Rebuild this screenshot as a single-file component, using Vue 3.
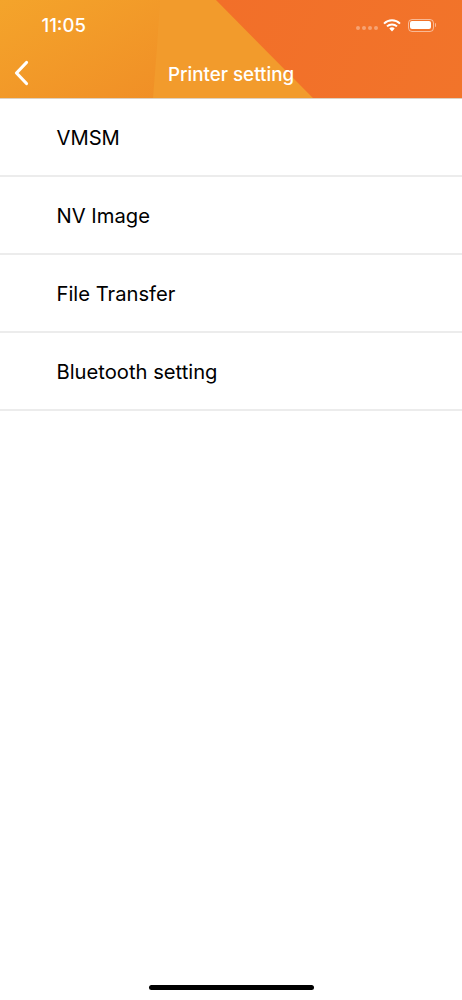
<script setup>
const rows = ['VMSM', 'NV Image', 'File Transfer', 'Bluetooth setting']
</script>

<template>
  <div class="page">
    <header class="header">
      <svg class="bg" width="462" height="98" viewBox="0 0 462 98" aria-hidden="true">
        <defs>
          <linearGradient id="lg" gradientUnits="userSpaceOnUse" x1="0" y1="0" x2="80" y2="150">
            <stop offset="0" stop-color="#f4a42b" />
            <stop offset="1" stop-color="#f08e26" />
          </linearGradient>
          <linearGradient id="lg2" gradientUnits="userSpaceOnUse" x1="216" y1="0" x2="462" y2="98">
            <stop offset="0" stop-color="#f26f29" />
            <stop offset="1" stop-color="#f2742a" />
          </linearGradient>
        </defs>
        <rect width="462" height="98" fill="url(#lg)" />
        <path d="M160 0 Q157 50 153 98 L313 98 L216 0 Z" fill="#f29b2c" />
        <path d="M216 0 L462 0 L462 98 L313 98 Z" fill="url(#lg2)" />
      </svg>
      <div class="status">
        <span class="time">11:05</span>
        <div class="status-icons">
          <span class="dots"><i></i><i></i><i></i><i></i></span>
          <svg width="18" height="13" viewBox="0 0 18 13" aria-hidden="true">
            <path d="M1 4.6 A11.5 11.5 0 0 1 17 4.6" fill="none" stroke="#fff" stroke-width="2" />
            <path d="M4 7.4 A7.2 7.2 0 0 1 14 7.4" fill="none" stroke="#fff" stroke-width="2" />
            <path d="M6.3 9.4 A3.6 3.6 0 0 1 11.7 9.4 L9 12.4 Z" fill="#fff" />
          </svg>
          <span class="battery"><span class="charge"></span></span>
          <span class="nub"></span>
        </div>
      </div>
      <div class="nav">
        <svg class="back" width="16" height="26" viewBox="0 0 16 26" aria-hidden="true">
          <path d="M13.5 2.5 L3.5 13 L13.5 23.5" fill="none" stroke="#fff" stroke-width="3.2" stroke-linecap="round" stroke-linejoin="round" />
        </svg>
        <h1 class="title">Printer setting</h1>
      </div>
    </header>
    <ul class="list">
      <li v-for="r in rows" :key="r" class="row">{{ r }}</li>
    </ul>
    <div class="spacer"></div>
    <div class="home"></div>
  </div>
</template>

<style>
html, body { margin: 0; background: #fff; }
</style>

<style scoped>
.page {
  width: 462px;
  height: 1000px;
  display: flex;
  flex-direction: column;
  background: #fff;
  font-family: Inter, "Liberation Sans", sans-serif;
  overflow: hidden;
}
.header {
  position: relative;
  height: 98px;
  flex: none;
  display: flex;
  flex-direction: column;
  color: #fff;
  box-shadow: 0 1px 0 #ddd0c0;
}
.bg { position: absolute; left: 0; top: 0; display: block; }
.status {
  position: relative;
  height: 50px;
  display: flex;
  align-items: center;
  justify-content: space-between;
  padding: 0 26px 0 41.5px;
  box-sizing: border-box;
}
.time { font-size: 18.5px; font-weight: 500; }
.status-icons { display: flex; align-items: center; }
.dots { display: flex; gap: 2px; margin-right: 5px; margin-top: 6px; }
.dots i { width: 4px; height: 4px; border-radius: 50%; background: rgba(255, 255, 255, 0.35); }
.battery {
  margin-left: 7px;
  width: 26px;
  height: 13px;
  border: 1px solid rgba(255, 255, 255, 0.5);
  border-radius: 4px;
  padding: 1.5px;
  box-sizing: border-box;
  display: flex;
}
.charge { flex: 1; background: #fff; border-radius: 2px; }
.nub { width: 1.5px; height: 4px; margin-left: 1px; background: rgba(255, 255, 255, 0.5); border-radius: 0 1px 1px 0; }
.nav {
  position: relative;
  flex: 1;
  display: flex;
  align-items: center;
  justify-content: center;
}
.back { position: absolute; left: 13px; top: 10px; }
.title { margin: 0; font-size: 18.8px; font-weight: 500; }
.list { list-style: none; margin: 1px 0 0; padding: 0; }
.row {
  height: 78px;
  box-sizing: border-box;
  display: flex;
  align-items: center;
  padding: 0 0 0 56.5px;
  border-bottom: 2px solid #ececec;
  font-size: 20.2px;
  color: #000;
}
.spacer { flex: 1; }
.home {
  flex: none;
  width: 165px;
  height: 5px;
  margin: 0 auto 10px;
  border-radius: 3px;
  background: #000;
}
</style>
